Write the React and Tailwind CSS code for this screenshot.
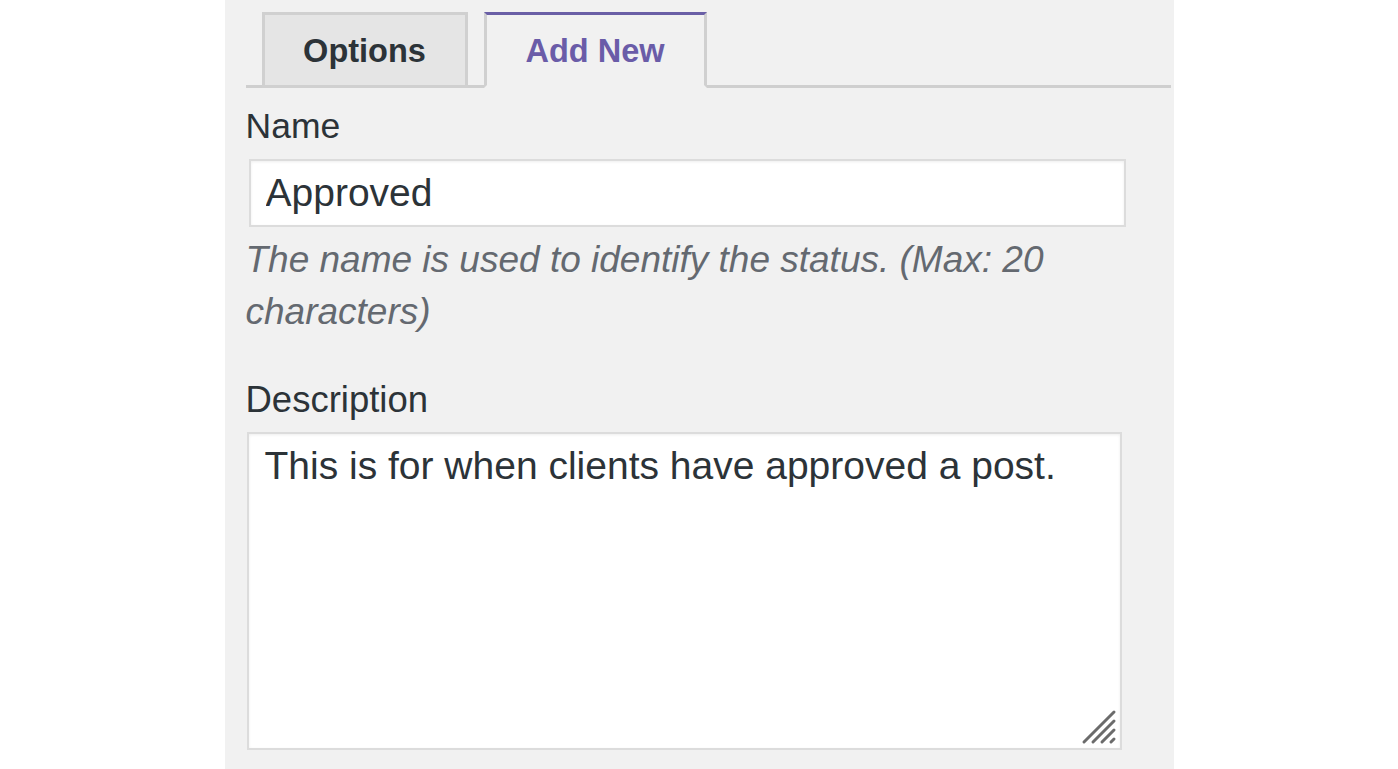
export default function App() {
  return (
    <div className="min-h-screen w-full bg-white font-['Liberation_Sans',Arial,sans-serif]">
      <div className="mx-auto flex h-[769px] w-[949px] flex-col bg-[#f1f1f1] pl-[21px] pr-[3px]">
        {/* Tabs */}
        <div className="flex items-end gap-[16px] border-b-[3px] border-[#cfcfcf] pl-[16px] pt-[12px]">
          <div className="-mb-[3px] flex h-[76px] w-[206px] items-center justify-center border-[3px] border-[#d0d0d0] bg-[#e5e5e5] pt-[2px] text-[32.5px] font-bold text-[#2c3338]">
            Options
          </div>
          <div className="-mb-[3px] flex h-[76px] w-[223px] items-center justify-center border-x-[3px] border-b-[3px] border-t-[3px] border-x-[#d0d0d0] border-b-[#f1f1f1] border-t-[#6a5fa6] bg-[#f1f1f1] pt-[2px] text-[32.5px] font-bold text-[#6a5ca8]">
            Add New
          </div>
        </div>

        {/* Name */}
        <label className="mt-[18px] block text-[35.5px] leading-[40px] text-[#2c3338]">Name</label>
        <input
          readOnly
          defaultValue="Approved"
          className="ml-[3px] mt-[13px] h-[68px] w-[877px] border-2 border-[#dcdcdc] bg-white pl-[15px] text-[39px] text-[#2c3338] shadow-[inset_0_1px_3px_rgba(0,0,0,0.07)] outline-none"
        />
        <p className="mt-[7px] text-[37px] italic leading-[52px] text-[#646970]">
          The name is used to identify the status. (Max: 20 characters)
        </p>

        {/* Description */}
        <label className="mt-[42px] block text-[36.5px] leading-[40px] text-[#2c3338]">Description</label>
        <div className="relative ml-[1px] mt-[12px] h-[318px] w-[875px]">
          <textarea
            readOnly
            defaultValue="This is for when clients have approved a post."
            className="block h-full w-full resize-none border-2 border-[#dcdcdc] bg-white pl-[16px] pr-[15px] pt-[8px] text-[39px] leading-[48px] text-[#2c3338] shadow-[inset_0_1px_3px_rgba(0,0,0,0.07)] outline-none"
          />
          <svg
            className="pointer-events-none absolute bottom-[5px] right-[5px]"
            width="36"
            height="36"
            viewBox="0 0 36 36"
          >
            <g stroke="#6b6b6b" strokeWidth="3" strokeLinecap="round">
              <line x1="3" y1="33" x2="33" y2="3" />
              <line x1="12" y1="33" x2="33" y2="12" />
              <line x1="21" y1="33" x2="33" y2="21" />
              <line x1="30" y1="33" x2="33" y2="30" />
            </g>
          </svg>
        </div>
      </div>
    </div>
  );
}
